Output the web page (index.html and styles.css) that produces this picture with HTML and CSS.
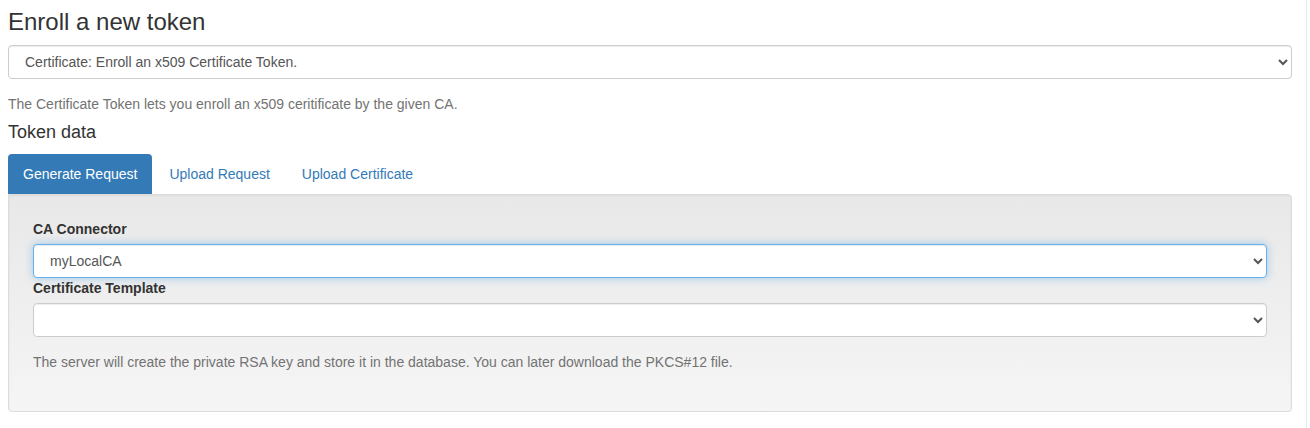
FILE: index.html
```html
<!DOCTYPE html>
<html lang="en">
<head>
<meta charset="utf-8">
<title>Enroll a new token</title>
<link rel="stylesheet" href="styles.css">
</head>
<body>
<div class="page">
  <h3 class="title">Enroll a new token</h3>
  <select class="form-control">
    <option>Certificate: Enroll an x509 Certificate Token.</option>
  </select>
  <p class="help top-help">The Certificate Token lets you enroll an x509 ceritificate by the given CA.</p>
  <h4 class="subtitle">Token data</h4>
  <ul class="tabs">
    <li class="tab active"><a>Generate Request</a></li>
    <li class="tab"><a>Upload Request</a></li>
    <li class="tab"><a>Upload Certificate</a></li>
  </ul>
  <div class="well">
    <label class="label">CA Connector</label>
    <select class="form-control focused">
      <option>myLocalCA</option>
    </select>
    <label class="label">Certificate Template</label>
    <select class="form-control">
      <option></option>
    </select>
    <p class="help well-help">The server will create the private RSA key and store it in the database. You can later download the PKCS#12 file.</p>
  </div>
</div>
</body>
</html>
```

FILE: styles.css
```css
* { box-sizing: border-box; }
html, body { margin: 0; padding: 0; background: #fff; }
body {
  font-family: "Liberation Sans", Arial, Helvetica, sans-serif;
  font-size: 14px;
  line-height: 20px;
  color: #333;
}
.page {
  width: 1307px;
  min-height: 428px;
  padding: 8px 14px 0 8px;
  border-right: 1px solid #ececec;
  display: flex;
  flex-direction: column;
  align-items: stretch;
}
.title {
  margin: 0 0 10px 0;
  padding-top: 0.5px;
  font-size: 24px;
  font-weight: 400;
  line-height: 1.1;
  color: #333;
}
.form-control {
  display: block;
  width: 100%;
  height: 34px;
  padding: 6px 12px;
  font-family: "Liberation Sans", Arial, Helvetica, sans-serif;
  font-size: 14px;
  line-height: 20px;
  color: #555;
  background: #fff;
  border: 1px solid #ccc;
  border-radius: 4px;
  box-shadow: inset 0 1px 1px rgba(0,0,0,.075);
  margin: 0;
}
.form-control.focused {
  border-color: #66afe9;
  box-shadow: inset 0 1px 1px rgba(0,0,0,.075), 0 0 8px rgba(102,175,233,.6);
  outline: 0;
}
.help {
  margin: 0;
  color: #737373;
}
.top-help { margin-top: 15px; }
.subtitle {
  margin: 9px 0 11px 0;
  font-size: 18px;
  font-weight: 400;
  line-height: 1.1;
  color: #333;
}
.tabs {
  list-style: none;
  margin: 0;
  padding: 0;
  display: flex;
  gap: 2px;
}
.tab a {
  display: block;
  padding: 10px 15px;
  line-height: 20px;
  color: #337ab7;
  border-radius: 4px 4px 0 0;
  cursor: pointer;
}
.tab.active a {
  background: #337ab7;
  color: #fff;
}
.well {
  display: flex;
  flex-direction: column;
  padding: 24px 24px 39px 24px;
  background-image: linear-gradient(to bottom, #e8e8e8 0%, #f5f5f5 100%);
  border: 1px solid #dcdcdc;
  border-radius: 0 4px 4px 4px;
  box-shadow: inset 0 1px 3px rgba(0,0,0,.05), 0 1px 0 rgba(255,255,255,.1);
}
.label {
  display: block;
  font-weight: 700;
  margin-bottom: 5px;
  line-height: 20px;
}
.well-help { margin-top: 15px; }
```
